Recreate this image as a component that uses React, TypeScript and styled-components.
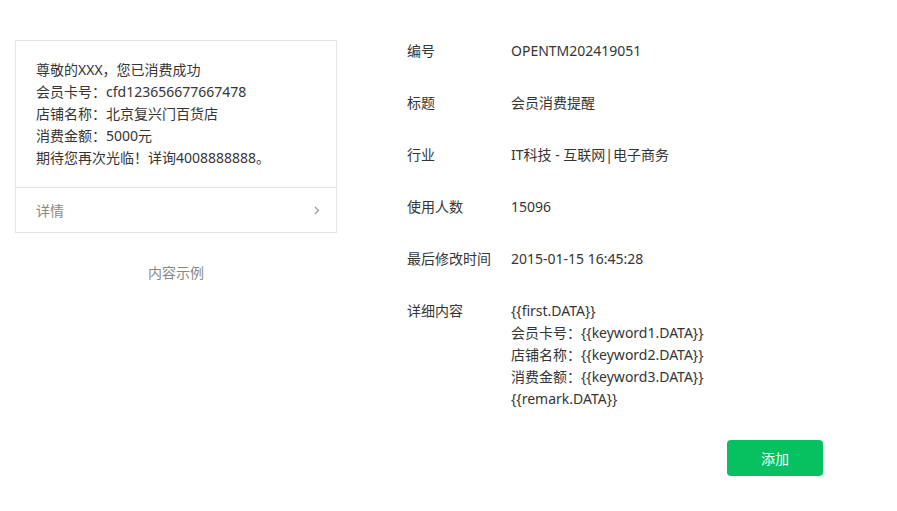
import styled, { createGlobalStyle } from 'styled-components'

const GlobalStyle = createGlobalStyle`
  html, body {
    margin: 0;
    padding: 0;
    background: #fff;
  }
  body {
    font-family: "Noto Sans", "Noto Sans CJK SC", sans-serif;
    font-size: 14px;
    color: #353535;
  }
`

const PREVIEW = [
  '尊敬的XXX，您已消费成功',
  '会员卡号：cfd123656677667478',
  '店铺名称：北京复兴门百货店',
  '消费金额：5000元',
  '期待您再次光临！详询4008888888。',
]

const INFO = [
  { label: '编号', value: ['OPENTM202419051'] },
  { label: '标题', value: ['会员消费提醒'] },
  { label: '行业', value: ['IT科技 - 互联网|电子商务'] },
  { label: '使用人数', value: ['15096'] },
  { label: '最后修改时间', value: ['2015-01-15 16:45:28'] },
  {
    label: '详细内容',
    value: [
      '{{first.DATA}}',
      '会员卡号：{{keyword1.DATA}}',
      '店铺名称：{{keyword2.DATA}}',
      '消费金额：{{keyword3.DATA}}',
      '{{remark.DATA}}',
    ],
  },
]

const ChevronRight = () => (
  <svg width="6" height="9" viewBox="0 0 6 9">
    <path d="M1 1l3.5 3.5L1 8" fill="none" stroke="#999" strokeWidth="1.2" />
  </svg>
)

const App = () => {
  return (
    <Page>
      <GlobalStyle />
      <PreviewColumn>
        <Card>
          <CardBody>
            {PREVIEW.map((line) => (
              <Line key={line}>{line}</Line>
            ))}
          </CardBody>
          <CardFooter>
            <span>详情</span>
            <ChevronRight />
          </CardFooter>
        </Card>
        <Caption>内容示例</Caption>
      </PreviewColumn>
      <InfoColumn>
        <InfoList>
          {INFO.map((row) => (
            <InfoRow key={row.label}>
              <Label>{row.label}</Label>
              <Value>
                {row.value.map((v) => (
                  <Line key={v}>{v}</Line>
                ))}
              </Value>
            </InfoRow>
          ))}
        </InfoList>
        <Actions>
          <AddButton>添加</AddButton>
        </Actions>
      </InfoColumn>
    </Page>
  )
}

export default App

const Page = styled.div`
  display: flex;
  align-items: flex-start;
  padding: 40px 0 0 15px;
  gap: 70px;
`

const PreviewColumn = styled.div`
  width: 322px;
  display: flex;
  flex-direction: column;
`

const Card = styled.div`
  border: 1px solid #e4e4e4;
  background: #fff;
`

const CardBody = styled.div`
  padding: 18px 20px;
`

const Line = styled.div`
  line-height: 22px;
  white-space: nowrap;
`

const CardFooter = styled.div`
  border-top: 1px solid #e4e4e4;
  height: 44px;
  padding: 0 16px 0 20px;
  display: flex;
  align-items: center;
  justify-content: space-between;
  color: #888;
`

const Caption = styled.div`
  margin-top: 29px;
  text-align: center;
  line-height: 22px;
  color: #888;
`

const InfoColumn = styled.div`
  width: 416px;
  display: flex;
  flex-direction: column;
`

const InfoList = styled.div`
  display: flex;
  flex-direction: column;
  gap: 30px;
`

const InfoRow = styled.div`
  display: flex;
  align-items: flex-start;
`

const Label = styled.div`
  width: 104px;
  flex-shrink: 0;
  line-height: 22px;
`

const Value = styled.div`
  display: flex;
  flex-direction: column;
`

const Actions = styled.div`
  display: flex;
  justify-content: flex-end;
  margin-top: 30px;
`

const AddButton = styled.button`
  width: 96px;
  height: 36px;
  border: none;
  border-radius: 4px;
  background: #07c160;
  color: #fff;
  font-family: inherit;
  font-size: 14px;
  cursor: pointer;
`
